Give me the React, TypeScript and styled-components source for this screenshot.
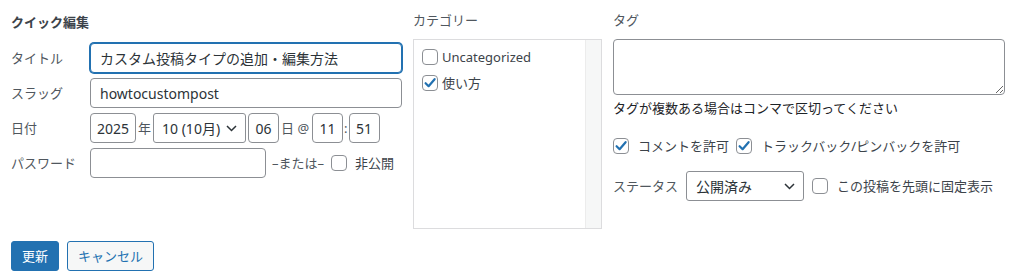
import React from "react";
import styled, { createGlobalStyle } from "styled-components";

const GlobalStyle = createGlobalStyle`
  * { box-sizing: border-box; }
  html, body { margin: 0; padding: 0; background: #ffffff; }
  body {
    font-family: "Noto Sans", "Noto Sans CJK JP", sans-serif;
    font-size: 13px;
    color: #3c434a;
  }
`;

const Panel = styled.div`
  width: 1024px;
  height: 280px;
  padding: 10px 0 0 11px;
  display: flex;
  flex-direction: column;
`;

const Columns = styled.div`
  display: grid;
  grid-template-columns: 391px 189px 392px;
  column-gap: 11px;
  align-items: start;
`;

const Column = styled.div`
  display: flex;
  flex-direction: column;
`;

const Legend = styled.div`
  font-weight: 700;
  font-size: 13px;
  line-height: 24px;
  color: #3c434a;
  margin-bottom: 9px;
`;

const Rows = styled.div`
  display: flex;
  flex-direction: column;
  gap: 5px;
`;

const Row = styled.div`
  display: flex;
  align-items: center;
  height: 30px;
`;

const Label = styled.span`
  width: 79px;
  flex: none;
  color: #50575e;
  font-size: 13px;
  line-height: 20px;
`;

const TextInput = styled.input<{ $w?: number; $focus?: boolean; $center?: boolean; $ml?: number }>`
  height: 30px;
  ${(p) => (p.$w ? `width: ${p.$w}px; flex: none;` : "flex: 1; min-width: 0;")}
  border: 1px solid ${(p) => (p.$focus ? "#2271b1" : "#8c8f94")};
  box-shadow: ${(p) => (p.$focus ? "0 0 0 1px #2271b1" : "none")};
  border-radius: 4px;
  background: #fff;
  padding: 0 ${(p) => (p.$center ? "4px" : "9px")};
  text-align: ${(p) => (p.$center ? "center" : "left")};
  font-family: "Noto Sans", "Noto Sans CJK JP", sans-serif;
  font-size: 14px;
  color: #2c3338;
  outline: none;
  margin: 0 0 0 ${(p) => p.$ml ?? 0}px;
`;

const Sep = styled.span<{ $ml?: number; $mr?: number }>`
  margin-left: ${(p) => p.$ml ?? 2}px;
  margin-right: ${(p) => p.$mr ?? 2}px;
  color: #50575e;
  font-size: 13px;
  line-height: 20px;
  white-space: pre;
`;

const SelectWrap = styled.div<{ $w: number }>`
  position: relative;
  width: ${(p) => p.$w}px;
  height: 30px;
  flex: none;
`;

const SelectBox = styled.select<{ $pl?: number }>`
  appearance: none;
  -webkit-appearance: none;
  width: 100%;
  height: 100%;
  border: 1px solid #8c8f94;
  border-radius: 3px;
  background: #fff;
  padding: 0 24px 0 ${(p) => p.$pl ?? 8}px;
  font-family: "Noto Sans", "Noto Sans CJK JP", sans-serif;
  font-size: 14px;
  color: #2c3338;
  outline: none;
  margin: 0;
`;

const Chevron = styled.svg`
  position: absolute;
  right: 9px;
  top: 12px;
  pointer-events: none;
`;

const CheckLabel = styled.label<{ $ml?: number }>`
  display: inline-flex;
  align-items: center;
  margin-left: ${(p) => p.$ml ?? 0}px;
  font-size: 13px;
  line-height: 20px;
  color: #3c434a;
  white-space: nowrap;
`;

const CheckText = styled.span<{ $gap: number }>`
  margin-left: ${(p) => p.$gap}px;
`;

const Box = styled.span`
  position: relative;
  width: 16px;
  height: 16px;
  flex: none;
  border: 1px solid #8c8f94;
  border-radius: 4px;
  background: #fff;
  display: inline-flex;
  align-items: center;
  justify-content: center;
`;

const Check = ({ checked }: { checked?: boolean }) => (
  <Box>
    {checked && (
      <svg width="14" height="14" viewBox="0 0 14 14">
        <path d="M2.6 7.2 L5.6 10.2 L11.6 3.2" fill="none" stroke="#2271b1" strokeWidth="2.2" strokeLinecap="round" strokeLinejoin="round" />
      </svg>
    )}
  </Box>
);

const ColTitle = styled.div`
  font-size: 13px;
  line-height: 20px;
  color: #50575e;
  margin-bottom: 9px;
`;

const CatBox = styled.div`
  height: 190px;
  border: 1px solid #dcdcde;
  display: flex;
`;

const CatList = styled.div`
  flex: 1;
  padding: 9px 0 0 8px;
  display: flex;
  flex-direction: column;
  gap: 10px;
`;

const Track = styled.div`
  width: 16px;
  background: #f6f7f7;
  border-left: 1px solid #ececec;
`;

const CatItem = styled.label`
  display: flex;
  align-items: center;
  font-size: 13px;
  line-height: 16px;
  color: #3c434a;
`;

const TagArea = styled.textarea`
  height: 56px;
  width: 100%;
  border: 1px solid #8c8f94;
  border-radius: 4px;
  resize: vertical;
  margin: 0;
  font-family: "Noto Sans", "Noto Sans CJK JP", sans-serif;
  font-size: 14px;
  outline: none;
`;

const Help = styled.div`
  margin-top: 3px;
  font-size: 13px;
  line-height: 20px;
  color: #1d2327;
`;

const RightRow = styled.div<{ $mt: number }>`
  display: flex;
  align-items: center;
  height: 30px;
  margin-top: ${(p) => p.$mt}px;
`;

const StatusLabel = styled.span`
  color: #50575e;
  margin-right: 8px;
  line-height: 20px;
`;

const Buttons = styled.div`
  display: flex;
  gap: 8px;
  margin-top: 12px;
`;

const Button = styled.button<{ $primary?: boolean }>`
  height: 30px;
  padding: 0 10px;
  border-radius: 3px;
  border: 1px solid #2271b1;
  background: ${(p) => (p.$primary ? "#2271b1" : "#f6f7f7")};
  color: ${(p) => (p.$primary ? "#fff" : "#2271b1")};
  font-family: "Noto Sans", "Noto Sans CJK JP", sans-serif;
  font-size: 13px;
  line-height: 28px;
  margin: 0;
  cursor: pointer;
`;

const ChevronIcon = () => (
  <Chevron width="11" height="7" viewBox="0 0 11 7">
    <path d="M1 1 L5.5 5.5 L10 1" fill="none" stroke="#2c3338" strokeWidth="1.5" />
  </Chevron>
);

export default function App() {
  return (
    <>
      <GlobalStyle />
      <Panel>
        <Columns>
          <Column>
            <Legend>クイック編集</Legend>
            <Rows>
              <Row>
                <Label>タイトル</Label>
                <TextInput $focus defaultValue="カスタム投稿タイプの追加・編集方法" />
              </Row>
              <Row>
                <Label>スラッグ</Label>
                <TextInput defaultValue="howtocustompost" />
              </Row>
              <Row>
                <Label>日付</Label>
                <TextInput $w={46} $center defaultValue="2025" />
                <Sep>年</Sep>
                <SelectWrap $w={93}>
                  <SelectBox defaultValue="10">
                    <option value="10">10 (10月)</option>
                  </SelectBox>
                  <ChevronIcon />
                </SelectWrap>
                <TextInput $w={31} $center $ml={2} defaultValue="06" />
                <Sep $mr={3}>日 @</Sep>
                <TextInput $w={31} $center defaultValue="11" />
                <Sep $ml={1} $mr={1}>:</Sep>
                <TextInput $w={31} $center defaultValue="51" />
              </Row>
              <Row>
                <Label>パスワード</Label>
                <TextInput $w={176} />
                <Sep $ml={6} $mr={0}>–または–</Sep>
                <CheckLabel $ml={7}>
                  <Check />
                  <CheckText $gap={8}>非公開</CheckText>
                </CheckLabel>
              </Row>
            </Rows>
          </Column>

          <Column>
            <ColTitle>カテゴリー</ColTitle>
            <CatBox>
              <CatList>
                <CatItem>
                  <Check />
                  <CheckText $gap={4}>Uncategorized</CheckText>
                </CatItem>
                <CatItem>
                  <Check checked />
                  <CheckText $gap={4}>使い方</CheckText>
                </CatItem>
              </CatList>
              <Track />
            </CatBox>
          </Column>

          <Column>
            <ColTitle>タグ</ColTitle>
            <TagArea />
            <Help>タグが複数ある場合はコンマで区切ってください</Help>
            <RightRow $mt={13}>
              <CheckLabel>
                <Check checked />
                <CheckText $gap={9}>コメントを許可</CheckText>
              </CheckLabel>
              <CheckLabel $ml={7}>
                <Check checked />
                <CheckText $gap={9}>トラックバック/ピンバックを許可</CheckText>
              </CheckLabel>
            </RightRow>
            <RightRow $mt={10}>
              <StatusLabel>ステータス</StatusLabel>
              <SelectWrap $w={118}>
                <SelectBox $pl={9} defaultValue="publish">
                  <option value="publish">公開済み</option>
                </SelectBox>
                <ChevronIcon />
              </SelectWrap>
              <CheckLabel $ml={8}>
                <Check />
                <CheckText $gap={9}>この投稿を先頭に固定表示</CheckText>
              </CheckLabel>
            </RightRow>
          </Column>
        </Columns>
        <Buttons>
          <Button $primary>更新</Button>
          <Button>キャンセル</Button>
        </Buttons>
      </Panel>
    </>
  );
}
